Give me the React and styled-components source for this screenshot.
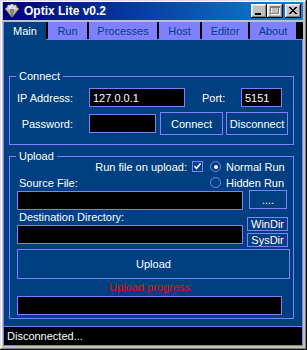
import React from 'react';
import styled, { createGlobalStyle } from 'styled-components';

const BLUE = '#004080';
const LAV = '#8080ff';
const FONT = '"Liberation Sans", Arial, sans-serif';

const GlobalStyle = createGlobalStyle`
  html, body { margin: 0; padding: 0; background: #c0c0c0; }
  body { font-family: ${FONT}; font-size: 11px; }
  *, *::before, *::after { box-sizing: border-box; }
`;

const Window = styled.div`
  width: 307px;
  height: 350px;
  background: #c0c0c0;
  box-shadow: inset -1px -1px #0a0a0a, inset 1px 1px #dfdfdf,
    inset -2px -2px #808080, inset 2px 2px #ffffff;
  padding: 2px 4px 4px 3px;
  display: flex;
  flex-direction: column;
`;

const TitleBar = styled.div`
  height: 18px;
  flex: none;
  display: flex;
  align-items: center;
  padding: 0 2px 0 1px;
  margin-bottom: 2px;
  background: linear-gradient(90deg, #000080, #1084d0);
`;

const TitleText = styled.span`
  margin-left: 4px;
  color: #fff;
  font: bold 12px ${FONT};
  white-space: nowrap;
`;

const CaptionGroup = styled.div`
  margin-left: auto;
  display: flex;
  align-items: center;
`;

const CaptionButton = styled.div`
  width: 16px;
  height: 14px;
  margin-left: ${(p) => p.$ml || 0}px;
  background: #c0c0c0;
  box-shadow: inset -1px -1px #0a0a0a, inset 1px 1px #ffffff,
    inset -2px -2px #808080, inset 2px 2px #dfdfdf;
  display: flex;
  svg { display: block; }
`;

const TabStrip = styled.div`
  height: 18px;
  flex: none;
  display: flex;
  align-items: flex-start;
  background: linear-gradient(to bottom, #000 17px, ${LAV} 17px);
`;

const Tab = styled.div`
  width: ${(p) => p.$w}px;
  height: ${(p) => (p.$active ? 18 : 17)}px;
  margin-left: ${(p) => (p.$active ? 0 : 2)}px;
  display: flex;
  align-items: center;
  justify-content: center;
  font-size: 11px;
  background: ${(p) => (p.$active ? BLUE : LAV)};
  color: ${(p) => (p.$active ? '#fff' : BLUE)};
  border-left: ${(p) => (p.$active ? `1px solid ${LAV}` : 'none')};
  padding-top: ${(p) => (p.$active ? 0 : 1)}px;
`;

const Panel = styled.div`
  flex: 1;
  background: ${BLUE};
  border-left: 1px solid ${LAV};
  border-right: 1px solid ${LAV};
  padding: 30px 8px 0 5px;
  display: flex;
  flex-direction: column;
`;

const Group = styled.fieldset`
  margin: ${(p) => p.$mt || 0}px 0 0 0;
  border: 1px solid ${LAV};
  padding: 0 3px ${(p) => p.$pb}px 7px;
  min-width: 0;
  color: #fff;
`;

const Legend = styled.legend`
  padding: 0 3px;
  margin-left: -1px;
  height: 12px;
  line-height: 12px;
  font-size: 11px;
  color: #fff;
`;

const Row = styled.div`
  display: flex;
  align-items: ${(p) => p.$align || 'center'};
  height: ${(p) => (p.$h ? `${p.$h}px` : 'auto')};
  margin-top: ${(p) => p.$mt || 0}px;
`;

const FieldLabel = styled.span`
  width: ${(p) => p.$w}px;
  flex: none;
  text-align: ${(p) => p.$align || 'right'};
  color: #fff;
  white-space: nowrap;
`;

const TextBox = styled.input`
  width: ${(p) => p.$w}px;
  height: ${(p) => p.$h || 19}px;
  margin: ${(p) => p.$mt || 0}px 0 0 ${(p) => p.$ml || 0}px;
  flex: none;
  background: #000;
  border: 1px solid ${LAV};
  color: #fff;
  font: 11px ${FONT};
  padding: 0 0 0 3px;
  outline: none;
`;

const Button = styled.button`
  width: ${(p) => p.$w}px;
  height: ${(p) => p.$h}px;
  margin: ${(p) => p.$mt || 0}px 0 0 ${(p) => p.$ml || 0}px;
  flex: none;
  background: ${BLUE};
  border: 1px solid ${LAV};
  color: #fff;
  font: 11px ${FONT};
  padding: 0;
  white-space: nowrap;
`;

const LeftCell = styled.div`
  flex: 1;
  display: flex;
  align-items: center;
  justify-content: ${(p) => (p.$end ? 'flex-end' : 'flex-start')};
  padding: 0 ${(p) => (p.$end ? 7 : 0)}px 0 ${(p) => (p.$end ? 0 : 2)}px;
  color: #fff;
  white-space: nowrap;
`;

const CheckBox = styled.span`
  width: 11px;
  height: 11px;
  margin-left: 5px;
  border: 1px solid ${LAV};
  background: ${BLUE};
  display: flex;
  align-items: center;
  justify-content: center;
  svg { display: block; }
`;

const RadioCell = styled.div`
  width: 80px;
  flex: none;
  display: flex;
  align-items: center;
  color: #fff;
  white-space: nowrap;
`;

const RadioDot = styled.span`
  width: 11px;
  height: 11px;
  border-radius: 50%;
  border: 1px solid ${LAV};
  margin-right: 5px;
  display: flex;
  align-items: center;
  justify-content: center;
  &::after {
    content: '';
    width: 4px;
    height: 4px;
    border-radius: 50%;
    background: ${(p) => (p.$on ? '#fff' : 'transparent')};
  }
`;

const Column = styled.div`
  display: flex;
  flex-direction: column;
  gap: ${(p) => p.$gap || 0}px;
  margin: ${(p) => p.$mt || 0}px 0 0 ${(p) => p.$ml || 0}px;
`;

const DirLabel = styled.div`
  height: 15px;
  line-height: 15px;
  padding-left: 2px;
  color: #fff;
`;

const ProgressLabel = styled.div`
  width: 268px;
  height: 14px;
  line-height: 14px;
  margin-top: 1px;
  text-align: center;
  color: #ff0000;
`;

const ProgressBox = styled.div`
  width: 265px;
  height: 19px;
  margin-top: 2px;
  background: #000;
  border: 1px solid ${LAV};
`;

const StatusBar = styled.div`
  height: 20px;
  flex: none;
  background: #000;
  border: 1px solid ${LAV};
  color: #fff;
  padding-left: 3px;
  display: flex;
  align-items: center;
  font-size: 11px;
`;

const AppIcon = () => (
  <svg width="16" height="16" viewBox="0 0 16 16">
    <path d="M8 1 L12 2 L15 6 L8 15 L1 6 L4 2 Z" fill="#b8b8b8" stroke="#303030" strokeWidth="1" strokeLinejoin="round" />
    <path d="M4 2 L6 6 L8 1 L10 6 L12 2" fill="none" stroke="#ffffff" strokeWidth="0.8" />
    <path d="M1.5 6 H14.5" stroke="#f0f0f0" strokeWidth="0.8" />
    <path d="M6 6 L8 14 L10 6" fill="#8a8a8a" stroke="#606060" strokeWidth="0.6" />
    <path d="M5 3 L7 2.5 L6 5 Z" fill="#ffffff" />
  </svg>
);

const MinIcon = () => (
  <svg width="16" height="14" viewBox="0 0 16 14" shapeRendering="crispEdges">
    <rect x="4" y="9" width="6" height="2" fill="#000" />
  </svg>
);

const MaxIcon = () => (
  <svg width="16" height="14" viewBox="0 0 16 14" shapeRendering="crispEdges">
    <g fill="none" stroke="#ffffff">
      <rect x="4.5" y="3.5" width="8" height="7" />
    </g>
    <rect x="4" y="2" width="9" height="2" fill="#808080" />
    <rect x="3.5" y="2.5" width="8" height="7" fill="none" stroke="#808080" />
  </svg>
);

const CloseIcon = () => (
  <svg width="16" height="14" viewBox="0 0 16 14" shapeRendering="crispEdges">
    <path d="M4 3 h2 v1 h1 v1 h2 v-1 h1 v-1 h2 v1 h-1 v1 h-1 v1 h-1 v1 h1 v1 h1 v1 h1 v1 h-2 v-1 h-1 v-1 h-2 v1 h-1 v1 h-2 v-1 h1 v-1 h1 v-1 h1 v-1 h-1 v-1 h-1 v-1 h-1 Z" fill="#000" />
  </svg>
);

const CheckMark = () => (
  <svg width="9" height="9" viewBox="0 0 9 9">
    <path d="M1.5 4 L3.5 6.5 L7.5 1.5" fill="none" stroke="#fff" strokeWidth="1.6" />
  </svg>
);

const tabs = [
  { label: 'Main', w: 43, active: true },
  { label: 'Run', w: 39 },
  { label: 'Processes', w: 68 },
  { label: 'Host', w: 41 },
  { label: 'Editor', w: 46 },
  { label: 'About', w: 46 },
];

export default function App() {
  return (
    <>
      <GlobalStyle />
      <Window>
        <TitleBar>
          <AppIcon />
          <TitleText>Optix Lite v0.2</TitleText>
          <CaptionGroup>
            <CaptionButton><MinIcon /></CaptionButton>
            <CaptionButton><MaxIcon /></CaptionButton>
            <CaptionButton $ml={2}><CloseIcon /></CaptionButton>
          </CaptionGroup>
        </TitleBar>

        <TabStrip>
          {tabs.map((t) => (
            <Tab key={t.label} $w={t.w} $active={t.active}>{t.label}</Tab>
          ))}
        </TabStrip>

        <Panel>
          <Group $pb={9}>
            <Legend>Connect</Legend>
            <Row $mt={6} $h={19}>
              <FieldLabel $w={56}>IP Address:</FieldLabel>
              <TextBox $w={96} $ml={16} readOnly value="127.0.0.1" />
              <FieldLabel $w={39} $align="left" style={{ marginLeft: 17 }}>Port:</FieldLabel>
              <TextBox $w={41} readOnly value="5151" />
            </Row>
            <Row $mt={5} $h={23}>
              <FieldLabel $w={56}>Password:</FieldLabel>
              <TextBox $w={67} $ml={16} readOnly value="" />
              <Button $w={63} $h={23} $ml={4}>Connect</Button>
              <Button $w={62} $h={23} $ml={3}>Disconnect</Button>
            </Row>
          </Group>

          <Group $mt={5} $pb={3}>
            <Legend>Upload</Legend>
            <Row $mt={-2} $h={13}>
              <LeftCell $end>
                Run file on upload:
                <CheckBox><CheckMark /></CheckBox>
              </LeftCell>
              <RadioCell><RadioDot $on />Normal Run</RadioCell>
            </Row>
            <Row $mt={3} $h={13}>
              <LeftCell>Source File:</LeftCell>
              <RadioCell><RadioDot />Hidden Run</RadioCell>
            </Row>
            <Row $mt={1} $h={20} $align="flex-start">
              <TextBox $w={226} $mt={1} readOnly value="" />
              <Button $w={38} $h={19} $ml={6}>....</Button>
            </Row>
            <Row $align="flex-start">
              <Column>
                <DirLabel>Destination Directory:</DirLabel>
                <TextBox $w={226} readOnly value="" />
              </Column>
              <Column $ml={4} $mt={7} $gap={2}>
                <Button $w={41} $h={14}>WinDir</Button>
                <Button $w={41} $h={14}>SysDir</Button>
              </Column>
            </Row>
            <Button $w={273} $h={30} $mt={2}>Upload</Button>
            <ProgressLabel>Upload progress:</ProgressLabel>
            <ProgressBox />
          </Group>
        </Panel>

        <StatusBar>Disconnected...</StatusBar>
      </Window>
    </>
  );
}
